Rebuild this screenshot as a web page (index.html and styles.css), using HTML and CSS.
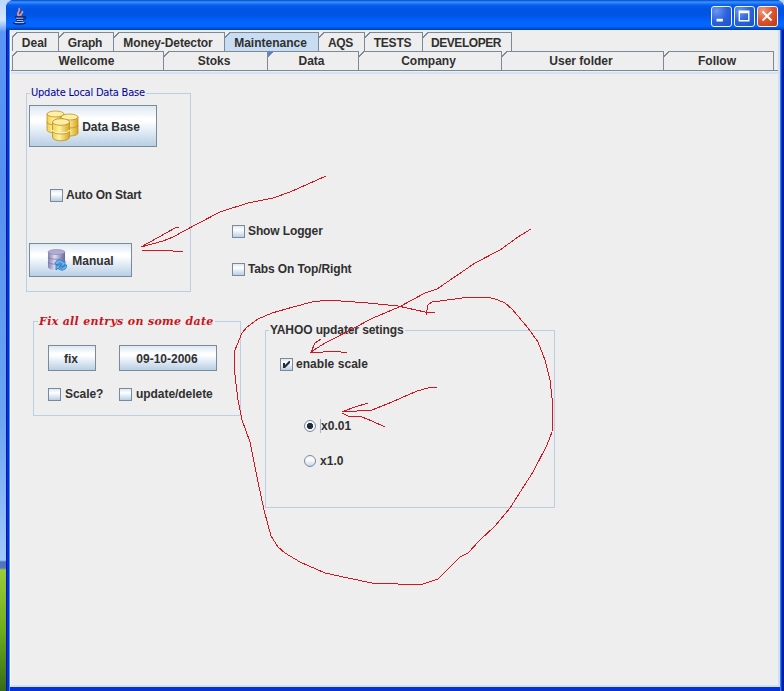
FILE: index.html
```html
<!DOCTYPE html>
<html lang="en">
<head>
<meta charset="utf-8">
<title>Maintenance</title>
<link rel="stylesheet" href="styles.css">
</head>
<body>
<div class="desktop">
<div class="window">
  <header class="titlebar">
    <svg class="java" width="16" height="18" viewBox="0 0 16 18" fill="none">
      <path d="M7 9C3 6 9 5 7 1M9 9c-2-2 3-3 1-5M6 8h3" stroke="#e8907c" stroke-width="1.700"/>
      <path d="M3 10h8M4 12.500h7M5 14.500h5M1 16c3 1.500 9 1.500 13 0M11 10c4-1 3 2 0 3" stroke="#16205c" stroke-width="1.300"/>
      <path d="M4 11.200h7M5 13.500h6M3 15.500h9" stroke="#a9b9e4"/>
    </svg>
    <div class="controls">
      <svg class="control" width="21" height="21" viewBox="0 0 21 21"><path d="M5 13h7v3H5z" fill="#fff"/></svg>
      <svg class="control" width="21" height="21" viewBox="0 0 21 21"><path d="M4 4h12v12H4zM5.500 7v7.500h9V7z" fill="#fff" fill-rule="evenodd"/></svg>
      <svg class="control close" width="21" height="21" viewBox="0 0 21 21"><path d="M5 5l10 10M15 5L5 15" stroke="#fff" stroke-width="2.200"/></svg>
    </div>
  </header>
  <div class="client">
    <nav class="tabs top">
      <div class="tab">Deal</div>
      <div class="tab graph">Graph</div>
      <div class="tab money">Money-Detector</div>
      <div class="tab selected">Maintenance</div>
      <div class="tab aqs">AQS</div>
      <div class="tab tests">TESTS</div>
      <div class="tab developer">DEVELOPER</div>
    </nav>
    <nav class="tabs bottom">
      <div class="tab">Wellcome</div>
      <div class="tab">Stoks</div>
      <div class="tab marked">Data</div>
      <div class="tab">Company</div>
      <div class="tab">User folder</div>
      <div class="tab">Follow</div>
    </nav>
    <main class="page">
      <div class="row first">
        <section class="group update">
          <h2 class="caption blue">Update Local Data Base</h2>
          <div class="button database">
            <svg width="34" height="32" viewBox="0 0 34 32">
              <defs><linearGradient id="gold"><stop stop-color="#f3cf4c"/><stop offset=".4" stop-color="#fff3a5"/><stop offset="1" stop-color="#d7a521"/></linearGradient></defs>
              <g fill="url(#gold)" stroke="#bd8f22" stroke-width=".8">
                <path d="M1 4v16c0 4 17 4 17 0V4"/><path d="M1 12c0 4 17 4 17 0" fill="none"/><ellipse cx="9.500" cy="4" rx="8.500" ry="3" fill="#fff0a6"/>
                <path d="M15 7v16c0 4 17 4 17 0V7"/><path d="M15 15c0 4 17 4 17 0" fill="none"/><ellipse cx="23.500" cy="7" rx="8.500" ry="3" fill="#fff0a6"/>
                <path d="M6.500 12v15c0 5 17 5 17 0V12"/><path d="M6.500 20c0 4 17 4 17 0" fill="none" stroke="#fff5bd" stroke-width="1.500"/><path d="M6.500 21c0 4 17 4 17 0" fill="none"/><ellipse cx="15" cy="12" rx="8.500" ry="3.300" fill="#fff0a6"/>
              </g>
            </svg>
            <span>Data Base</span>
          </div>
          <div class="check auto"><i class="box"></i>Auto On Start</div>
          <div class="button manual">
            <svg width="20" height="22" viewBox="0 0 20 22">
              <defs><linearGradient id="steel"><stop stop-color="#8581b5"/><stop offset=".4" stop-color="#dddbed"/><stop offset="1" stop-color="#68649c"/></linearGradient></defs>
              <path d="M1 3v15c0 4 17 4 17 0V3" fill="url(#steel)"/>
              <path d="M1 8c0 3 17 3 17 0M1 13c0 3 17 3 17 0" fill="none" stroke="#77739f" stroke-width=".7"/>
              <ellipse cx="9.500" cy="3" rx="8.500" ry="2.500" fill="#b0accf" stroke="#8582ac" stroke-width=".6"/>
              <path d="M8 15c0-4 6-6 8-2l2-1v5h-5l2-2c-2-2-4-1-4 1zM20 16c0 5-6 7-9 3l-2 2v-5h5l-2 2c2 2 5 1 5-2z" fill="#62b5f3" stroke="#2877bd" stroke-width=".8"/>
            </svg>
            <span>Manual</span>
          </div>
        </section>
        <div class="options">
          <div class="check"><i class="box"></i>Show Logger</div>
          <div class="check tabs-on"><i class="box"></i>Tabs On Top/Right</div>
        </div>
      </div>
      <div class="row second">
        <section class="group fix">
          <h2 class="caption red">Fix all entrys on some date</h2>
          <div class="fix-grid">
            <div class="button">fix</div>
            <div class="button date">09-10-2006</div>
            <div class="check"><i class="box"></i>Scale?</div>
            <div class="check"><i class="box"></i>update/delete</div>
          </div>
        </section>
        <section class="group yahoo">
          <h2 class="caption">YAHOO updater setings</h2>
          <div class="check enable"><i class="box"><svg width="11" height="11" viewBox="0 0 11 11"><path d="M2 4h2v2l4-4h1v2L4 9H2z" fill="#222d3b"/></svg></i>enable scale</div>
          <div class="check radio"><i class="dot on"></i><span class="focus">x0.01</span></div>
          <div class="check radio"><i class="dot"></i><span>x1.0</span></div>
        </section>
      </div>
    </main>
  </div>
</div>
<svg class="ink" width="784" height="691" viewBox="0 0 784 691">
  <path d="M326 176L308 184 290 192 273 198 248 203 220 212 197 224 173 237 163 241 141 247 175 228 179 227M142 250H163L183 252"/>
  <path d="M531 229L518 237 500 250 475 263 437 289 425 293 399 307 373 318 333 339 325 343 311 352 315 343 321 339M311 353L335 351 347 353"/>
  <path d="M437 387L428 388 417 391 392 402 372 410 342 412 352 408 368 403M342 413L348 416 362 417 372 421 385 427"/>
  <path d="M435 312H425L398 306 368 303 328 300 312 302 293 307 272 313 258 319 247 327 242 333 235 350 234 367 238 400 242 420 250 442 258 482 264 510 271 536 278 547 285 553 300 562 325 573 348 578 372 583 398 584H423L438 579 460 557 468 553 480 540 495 526 510 508 533 472 547 445 552 432 553 407 550 380 545 360 538 342 528 328 512 309 505 303 498 300 488 297H470L432 302 428 305 426 315"/>
</svg>
</div>
</body>
</html>
```
FILE: styles.css
```css
* { box-sizing: border-box; }
body { margin: 0; font: bold 12px/14px "Liberation Sans", Arial, sans-serif; color: #303030; }
.desktop {
  position: relative; width: 784px; height: 691px; overflow: hidden; padding-left: 6px;
  background: linear-gradient(#bdd8fb 0, #d6e6fb 20px, #5b98f5 32px, #5590ef 180px, #6da5f2 420px, #9fc9f9 560px, #4d72bd 562px, #5378bd 568px, #9ccc39 570px, #6fae1d 630px, #386b18 691px);
}
.window {
  display: flex; flex-direction: column; height: 691px; padding: 0 4px 4px;
  border-radius: 8px 8px 0 0;
  background: linear-gradient(90deg, #0018b0 0 1px, #0731d8 1px 3px, #4b8ff2 3px 4px, #0731d8 4px 774px, #3b7ce8 774px 775px, #0442d0 775px 776px, #001caa 776px);
}
.titlebar {
  display: flex; justify-content: space-between; flex: none; height: 30px; margin: 0 -4px; padding: 6px 6px 0 6px;
  border-radius: 8px 8px 0 0;
  background: linear-gradient(#0047c5 0, #3d92ff 2px, #0560ee 5px, #0054e3 9px, #0054e3 15px, #0364ff 22px, #0368ff 26px, #0049c8 29px, #003aa8 30px);
}
.java { margin-top: 1px; }
.controls { display: flex; gap: 2px; }
.control { border: 1px solid #f1f5ff; border-radius: 3px; background: radial-gradient(circle at 25% 20%, #6c97ef, #2b62dd 50%, #1d50cf); }
.close { background: radial-gradient(circle at 25% 20%, #f39a7d, #dc532c 50%, #bf3912); }
.client { flex: 1; padding: 2px 2px 0 1px; background: #eee; border: solid #cfe0fb; border-width: 0 2px 2px 0; border-left: 1px solid #fff; }
.tabs { display: grid; height: 19px; border-left: 1px solid #7a8a99; }
.top { grid-template-columns: 46px 55px 111px 94px 46px 58px 89px; justify-content: start; }
.bottom { grid-template-columns: 151px 104px 91px 143px 162px 110px; }
.tab { position: relative; padding: 3px 2px 0 0; text-align: center; border: solid #7a8a99; border-width: 1px 1px 0 0; white-space: nowrap; }
.tab::before { content: ""; position: absolute; left: 0; top: -1px; width: 6px; height: 6px; background: linear-gradient(135deg, #eee 0 3.5px, #7a8a99 3.5px 4.5px, transparent 4.5px); }
.tabs .tab:first-child::before { left: -1px; }
.bottom .tab { padding: 2px 3px 0 0; }
.tabs .selected { background: #c8ddf2; }
.marked::before { background: linear-gradient(135deg, #6685bd 0 4.5px, transparent 4.8px); }
.graph { letter-spacing: -.2px; }
.money { letter-spacing: -.1px; }
.aqs { letter-spacing: -.3px; }
.tests { letter-spacing: -.2px; }
.developer { letter-spacing: -.45px; }
.page { margin: 0 -2px 0 -1px; border-top: 1px solid #7a8a99; padding: 22px 0 0 15px; height: 615px; background: linear-gradient(#eee 0 1px, #d5e3f7 1px 3px, transparent 3px); }
.row { display: flex; align-items: flex-start; }
.group { border: 1px solid #b8cfe5; }
.caption { width: max-content; height: 14px; margin: -8px 0 0 3px; padding: 0 1px; font: inherit; letter-spacing: -.1px; background: #eee; white-space: nowrap; }
.blue { color: #00009a; font: 11px/14px "DejaVu Sans Condensed", "DejaVu Sans", sans-serif; letter-spacing: -.22px; }
.red { margin: -7px 0 -1px 4px; color: #c9151c; font: italic bold 11px/14px "DejaVu Serif", serif; letter-spacing: .32px; }
.button { display: flex; align-items: center; justify-content: center; gap: 4px; border: 1px solid #7a8a99; background: linear-gradient(#dde8f3 0, #fff 32%, #fff 38%, #b8cfe5 100%); }
.check { display: flex; align-items: center; gap: 3px; height: 14px; letter-spacing: -.12px; white-space: nowrap; }
.box { flex: none; width: 13px; height: 13px; border: 1px solid #7a8a99; background: linear-gradient(#dde8f3, #fff 35%, #b8cfe5); }
.box svg { display: block; }
.update { width: 165px; height: 199px; }
.database { width: 128px; height: 42px; margin: 5px 0 0 2px; gap: 2px; letter-spacing: -.05px; }
.database svg { margin-top: -1px; }
.database span, .manual span { padding-top: 1px; }
.auto { margin: 41px 0 0 23px; letter-spacing: -.2px; }
.manual { width: 103px; height: 34px; margin: 41px 0 0 2px; gap: 5px; }
.options { margin: 131px 0 0 41px; }
.tabs-on { margin-top: 24px; }
.second { margin-top: 29px; padding-left: 7px; gap: 24px; }
.fix { width: 208px; height: 95px; }
.fix-grid { display: grid; grid-template-columns: 48px 98px; grid-template-rows: 26px 14px; gap: 16px 23px; padding: 17px 0 0 14px; }
.fix-grid .button { padding: 1px 2px 0 0; }
.fix-grid .check { gap: 4px; letter-spacing: -.05px; }
.yahoo { width: 290px; height: 178px; margin-top: 9px; }
.yahoo .check { letter-spacing: .05px; }
.enable { margin: 20px 0 0 14px; }
.radio { gap: 4px; margin: 48px 0 0 38px; }
.radio + .radio { margin-top: 21px; }
.dot { flex: none; width: 12px; height: 12px; border: 1px solid #7a8a99; border-radius: 50%; background: linear-gradient(#e8f0f8, #fff 35%, #c5d8ea); }
.on { background: radial-gradient(circle, #222b37 0 2.8px, #f4f7fa 3.5px); }
.focus { border-left: 1px solid #a3b8cc; }
.ink { position: absolute; left: 0; top: 0; fill: none; stroke: #d4141e; stroke-width: 1; shape-rendering: crispEdges; }
```
